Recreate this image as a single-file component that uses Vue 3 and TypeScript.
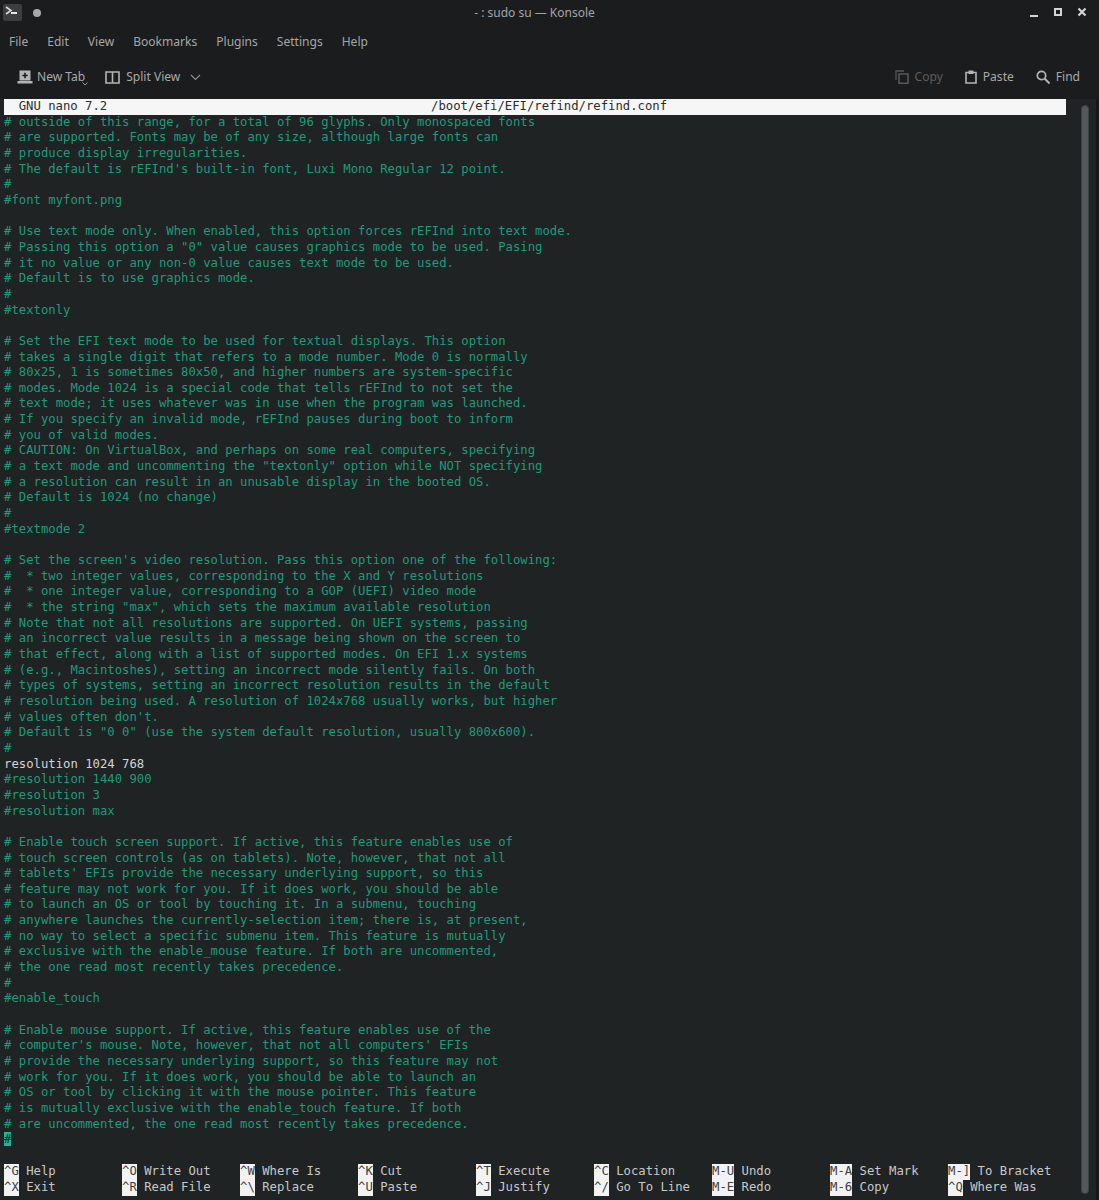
<script setup lang="ts">
const menus: string[] = ['File', 'Edit', 'View', 'Bookmarks', 'Plugins', 'Settings', 'Help']

const text = `# outside of this range, for a total of 96 glyphs. Only monospaced fonts
# are supported. Fonts may be of any size, although large fonts can
# produce display irregularities.
# The default is rEFInd's built-in font, Luxi Mono Regular 12 point.
#
#font myfont.png

# Use text mode only. When enabled, this option forces rEFInd into text mode.
# Passing this option a "0" value causes graphics mode to be used. Pasing
# it no value or any non-0 value causes text mode to be used.
# Default is to use graphics mode.
#
#textonly

# Set the EFI text mode to be used for textual displays. This option
# takes a single digit that refers to a mode number. Mode 0 is normally
# 80x25, 1 is sometimes 80x50, and higher numbers are system-specific
# modes. Mode 1024 is a special code that tells rEFInd to not set the
# text mode; it uses whatever was in use when the program was launched.
# If you specify an invalid mode, rEFInd pauses during boot to inform
# you of valid modes.
# CAUTION: On VirtualBox, and perhaps on some real computers, specifying
# a text mode and uncommenting the "textonly" option while NOT specifying
# a resolution can result in an unusable display in the booted OS.
# Default is 1024 (no change)
#
#textmode 2

# Set the screen's video resolution. Pass this option one of the following:
#  * two integer values, corresponding to the X and Y resolutions
#  * one integer value, corresponding to a GOP (UEFI) video mode
#  * the string "max", which sets the maximum available resolution
# Note that not all resolutions are supported. On UEFI systems, passing
# an incorrect value results in a message being shown on the screen to
# that effect, along with a list of supported modes. On EFI 1.x systems
# (e.g., Macintoshes), setting an incorrect mode silently fails. On both
# types of systems, setting an incorrect resolution results in the default
# resolution being used. A resolution of 1024x768 usually works, but higher
# values often don't.
# Default is "0 0" (use the system default resolution, usually 800x600).
#
resolution 1024 768
#resolution 1440 900
#resolution 3
#resolution max

# Enable touch screen support. If active, this feature enables use of
# touch screen controls (as on tablets). Note, however, that not all
# tablets' EFIs provide the necessary underlying support, so this
# feature may not work for you. If it does work, you should be able
# to launch an OS or tool by touching it. In a submenu, touching
# anywhere launches the currently-selection item; there is, at present,
# no way to select a specific submenu item. This feature is mutually
# exclusive with the enable_mouse feature. If both are uncommented,
# the one read most recently takes precedence.
#
#enable_touch

# Enable mouse support. If active, this feature enables use of the
# computer's mouse. Note, however, that not all computers' EFIs
# provide the necessary underlying support, so this feature may not
# work for you. If it does work, you should be able to launch an
# OS or tool by clicking it with the mouse pointer. This feature
# is mutually exclusive with the enable_touch feature. If both
# are uncommented, the one read most recently takes precedence.`

const lines: string[] = text.split('\n')

interface Shortcut { key: string; label: string }
const top: Shortcut[] = [
  { key: '^G', label: 'Help' }, { key: '^O', label: 'Write Out' }, { key: '^W', label: 'Where Is' },
  { key: '^K', label: 'Cut' }, { key: '^T', label: 'Execute' }, { key: '^C', label: 'Location' },
  { key: 'M-U', label: 'Undo' }, { key: 'M-A', label: 'Set Mark' }, { key: 'M-]', label: 'To Bracket' },
]
const bottom: Shortcut[] = [
  { key: '^X', label: 'Exit' }, { key: '^R', label: 'Read File' }, { key: '^\\', label: 'Replace' },
  { key: '^U', label: 'Paste' }, { key: '^J', label: 'Justify' }, { key: '^/', label: 'Go To Line' },
  { key: 'M-E', label: 'Redo' }, { key: 'M-6', label: 'Copy' }, { key: '^Q', label: 'Where Was' },
]
const rows: Shortcut[][] = [top, bottom]
</script>

<template>
  <div class="window">
    <header class="titlebar">
      <div class="app-icon">
        <svg width="18" height="16" viewBox="0 0 18 16">
          <path d="M2 2l5 3.5L2 9" fill="none" stroke="#d8d8d8" stroke-width="1.6" />
          <path d="M7 8h6" stroke="#e8e8e8" stroke-width="2" />
        </svg>
      </div>
      <span class="pin"></span>
      <div class="title">- : sudo su — Konsole</div>
      <div class="controls">
        <svg width="14" height="14" viewBox="0 0 14 14"><path d="M3 11h8" stroke="#d4d4d4" stroke-width="2" /></svg>
        <svg width="14" height="14" viewBox="0 0 14 14"><rect x="4" y="4" width="6" height="6" fill="none" stroke="#d4d4d4" stroke-width="2" /></svg>
        <svg width="14" height="14" viewBox="0 0 14 14"><path d="M3.500 3.500l7 7M10.500 3.500l-7 7" stroke="#d4d4d4" stroke-width="2.200" /></svg>
      </div>
    </header>

    <nav class="menubar">
      <span v-for="m in menus" :key="m">{{ m }}</span>
    </nav>

    <div class="toolbar">
      <div class="tool newtab">
        <svg width="16" height="14" viewBox="0 0 16 14">
          <path d="M2.500 0.500h11v10h-11z" fill="#b4b4b4" />
          <path d="M0.500 11h15v2.500h-15z" fill="#b4b4b4" />
          <path d="M8 2.800v5.400M5.300 5.500h5.400" stroke="#1c1d1f" stroke-width="1.600" />
        </svg>
        <span>New Tab</span>
        <svg class="drop" width="6" height="4" viewBox="0 0 6 4"><path d="M0.500 0.500L3 3l2.500-2.500" fill="none" stroke="#9a9a9a" /></svg>
      </div>
      <div class="tool split">
        <svg width="15" height="13" viewBox="0 0 15 13">
          <path d="M1 1h13v11H1zM7.500 1v11" fill="none" stroke="#b4b4b4" stroke-width="1.600" />
        </svg>
        <span>Split View</span>
        <svg class="chev" width="11" height="7" viewBox="0 0 11 7"><path d="M1 1l4.500 4.500L10 1" fill="none" stroke="#8f8f8f" stroke-width="1.100" /></svg>
      </div>
      <div class="spacer"></div>
      <div class="tool disabled">
        <svg width="14" height="14" viewBox="0 0 14 14">
          <path d="M1 10V1h8" fill="none" stroke="#585858" stroke-width="1.300" />
          <path d="M4 4h9v9.300H4z" fill="none" stroke="#585858" stroke-width="1.600" />
        </svg>
        <span>Copy</span>
      </div>
      <div class="tool pushed">
        <svg width="12" height="14" viewBox="0 0 12 14">
          <path d="M1 2.500h10V13H1z" fill="none" stroke="#b4b4b4" stroke-width="1.600" />
          <path d="M3.500 0.500h5v3.500h-5z" fill="#b4b4b4" />
        </svg>
        <span>Paste</span>
      </div>
      <div class="tool pushed">
        <svg width="14" height="14" viewBox="0 0 14 14">
          <circle cx="5.500" cy="5.500" r="4.200" fill="none" stroke="#b4b4b4" stroke-width="1.700" />
          <path d="M8.500 8.500l5 5" stroke="#b4b4b4" stroke-width="2" />
        </svg>
        <span>Find</span>
      </div>
    </div>

    <main class="terminal">
      <div class="screen">
        <div class="nano-head">
          <span class="version">GNU nano 7.2</span>
          <span class="file">/boot/efi/EFI/refind/refind.conf</span>
        </div>
        <div
          v-for="(line, i) in lines"
          :key="i"
          class="line"
          :class="{ active: line === 'resolution 1024 768' }"
        >{{ line }}</div>
        <div class="line"><span class="cursor">#</span></div>
        <div class="line spacer-line"></div>
        <div v-for="(row, r) in rows" :key="r" class="keys">
          <div v-for="s in row" :key="s.key" class="shortcut">
            <span class="key">{{ s.key }}</span>
            <span class="label">{{ s.label }}</span>
          </div>
        </div>
      </div>
      <div class="scroll-track"><div class="thumb"></div></div>
    </main>
  </div>
</template>

<style>
html, body { margin: 0; background: #1b1c1e; }
</style>

<style scoped>
.window {
  width: 1099px;
  height: 1200px;
  background: #1b1c1e;
  color: #a9a9a9;
  font-family: "Noto Sans", "Open Sans", sans-serif;
  font-size: 12.050px;
  display: flex;
  flex-direction: column;
  overflow: hidden;
}
.titlebar {
  height: 25px;
  display: flex;
  align-items: center;
  position: relative;
  padding: 0 0 0 3px;
}
.app-icon {
  width: 19px;
  height: 17px;
  background: #3d3e40;
  border-radius: 2px;
  display: flex;
  align-items: center;
  justify-content: center;
}
.pin {
  width: 8px;
  height: 8px;
  border-radius: 50%;
  background: #a8a8a8;
  margin-left: 11px;
}
.title {
  position: absolute;
  left: 0;
  right: 30px;
  top: 4px;
  text-align: center;
  font-size: 12px;
  color: #a4a4a4;
}
.controls {
  margin-left: auto;
  margin-right: 10px;
  margin-top: -1px;
  display: flex;
  gap: 10px;
}
.menubar {
  height: 32px;
  display: flex;
  align-items: center;
  gap: 19px;
  padding-left: 9px;
  color: #a6a6a6;
}
.toolbar {
  height: 40px;
  display: flex;
  align-items: center;
  gap: 20px;
  padding: 0 19px 2px 17px;
}
.tool {
  display: flex;
  align-items: center;
  gap: 6px;
  position: relative;
}
.tool span { line-height: 16px; }
.newtab { gap: 4px; }
.drop { position: absolute; right: -3px; bottom: -1px; }
.chev { margin-left: 4px; }
.pushed { margin-left: 2px; }
.spacer { flex: 1; }
.disabled { color: #5d5d5d; }
.terminal {
  flex: 1;
  background: #1f2324;
  display: flex;
  min-height: 0;
  padding-left: 4px;
  border-right: 3px solid #15171d;
  position: relative;
}
.screen {
  width: 1062px;
  font-family: "DejaVu Sans Mono", "Liberation Mono", monospace;
  font-size: 12.250px;
  line-height: 15.670px;
  color: #209a7b;
  white-space: pre;
}
.nano-head {
  background: #f6f6f6;
  color: #2a2d2e;
  height: 15.670px;
  position: relative;
  padding-left: 14.720px;
}
.file {
  position: absolute;
  left: 427px;
  top: 0;
}
.line { height: 15.670px; }
.spacer-line { height: 16.300px; }
.active { color: #d4d4d4; }
.cursor {
  background: #22b391;
  color: #1f2324;
}
.keys {
  display: grid;
  grid-template-columns: repeat(9, 118px);
  height: 15.670px;
  color: #c8c8c8;
}
.shortcut { display: flex; gap: 7.360px; }
.key {
  background: #f2f2f2;
  color: #3c3f40;
}
.scroll-track {
  width: 29px;
  display: flex;
  justify-content: center;
  padding: 6px 0 6px;
  box-sizing: border-box;
  background: #1f2324;
}
.thumb {
  width: 8px;
  margin-left: 9px;
  border-radius: 4px;
  background: #55585a;
  border: 1px solid #3e4243;
  box-sizing: border-box;
}
</style>
